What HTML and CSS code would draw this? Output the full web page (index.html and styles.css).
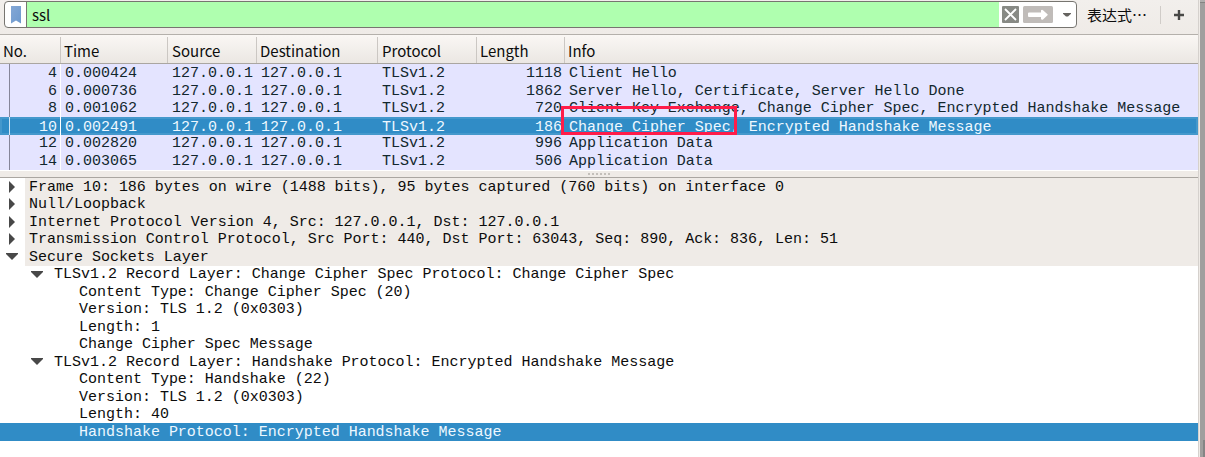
FILE: index.html
```html
<!DOCTYPE html>
<html lang="zh-CN">
<head>
<meta charset="utf-8">
<title>Wireshark</title>
<link rel="stylesheet" href="styles.css">
</head>
<body>
<div class="window">
<main class="app">
  <div class="toolbar">
    <div class="filter">
      <span class="bookmark"><svg width="10" height="18" viewBox="0 0 10 18"><defs><linearGradient id="b" x1="0" y1="0" x2="1" y2="1"><stop offset="0" stop-color="#84a8d6"/><stop offset="1" stop-color="#6d99cd"/></linearGradient></defs><path d="M0 0H10V17.500L5 14.500L0 17.500Z" fill="url(#b)"/></svg></span>
      <span class="query">ssl</span>
      <span class="actions">
        <svg width="17" height="17" viewBox="0 0 17 17"><rect width="17" height="17" rx="1" fill="#888a85"/><path d="M3 3L14 14M14 3L3 14" stroke="#fff" stroke-width="1.800"/></svg>
        <svg class="apply" width="30" height="17" viewBox="0 0 30 17"><rect width="30" height="17" rx="1.500" fill="#c0bcb9"/><path d="M6 6.500H18V4.300Q19 3.300 20 4.200L24.500 8.200Q25 8.700 24.500 9.200L20 13.400Q18.700 14.200 18 13V11H6Q5 11 5 10V7.500Q5 6.500 6 6.500Z" fill="#fff"/></svg>
        <svg class="drop" width="8" height="4" viewBox="0 0 8 4"><path d="M0 0H8V.8L5 3.500H3L0 .8Z" fill="#65635f"/></svg>
      </span>
    </div>
    <span class="expression">表达式…</span>
    <span class="separator"></span>
    <svg class="plus" width="10" height="10" viewBox="0 0 10 10"><path d="M5 0V10M0 5H10" stroke="#484846" stroke-width="2.400"/></svg>
  </div>
  <div class="head cols"><span>No.</span><span>Time</span><span>Source</span><span>Destination</span><span>Protocol</span><span>Length</span><span>Info</span></div>
  <section class="packets">
    <div class="packet cols"><span>4</span><span>0.000424</span><span>127.0.0.1</span><span>127.0.0.1</span><span>TLSv1.2</span><span>1118</span><span>Client Hello</span></div>
    <div class="packet cols"><span>6</span><span>0.000736</span><span>127.0.0.1</span><span>127.0.0.1</span><span>TLSv1.2</span><span>1862</span><span>Server Hello, Certificate, Server Hello Done</span></div>
    <div class="packet cols short"><span>8</span><span>0.001062</span><span>127.0.0.1</span><span>127.0.0.1</span><span>TLSv1.2</span><span>720</span><span>Client Key Exchange, Change Cipher Spec, Encrypted Handshake Message</span></div>
    <div class="packet cols selected"><span>10</span><span>0.002491</span><span>127.0.0.1</span><span>127.0.0.1</span><span>TLSv1.2</span><span>186</span><span>Change Cipher Spec, Encrypted Handshake Message</span></div>
    <div class="packet cols after"><span>12</span><span>0.002820</span><span>127.0.0.1</span><span>127.0.0.1</span><span>TLSv1.2</span><span>996</span><span>Application Data</span></div>
    <div class="packet cols last"><span>14</span><span>0.003065</span><span>127.0.0.1</span><span>127.0.0.1</span><span>TLSv1.2</span><span>506</span><span>Application Data</span></div>
    <div class="highlight"></div>
  </section>
  <div class="splitter"><i></i><i></i><i></i><i></i><i></i><i></i></div>
  <section class="tree">
    <div class="node top"><svg class="closed" width="6" height="12" viewBox="0 0 6 12"><path d="M0 0L6 6L0 12Z"/></svg><span>Frame 10: 186 bytes on wire (1488 bits), 95 bytes captured (760 bits) on interface 0</span></div>
    <div class="node top"><svg class="closed" width="6" height="12" viewBox="0 0 6 12"><path d="M0 0L6 6L0 12Z"/></svg><span>Null/Loopback</span></div>
    <div class="node top"><svg class="closed" width="6" height="12" viewBox="0 0 6 12"><path d="M0 0L6 6L0 12Z"/></svg><span>Internet Protocol Version 4, Src: 127.0.0.1, Dst: 127.0.0.1</span></div>
    <div class="node top"><svg class="closed" width="6" height="12" viewBox="0 0 6 12"><path d="M0 0L6 6L0 12Z"/></svg><span>Transmission Control Protocol, Src Port: 440, Dst Port: 63043, Seq: 890, Ack: 836, Len: 51</span></div>
    <div class="node top"><svg class="open" width="12" height="7" viewBox="0 0 12 7"><path d="M0 0H12V1L6 7L0 1Z"/></svg><span>Secure Sockets Layer</span></div>
    <div class="node record"><svg class="open" width="12" height="7" viewBox="0 0 12 7"><path d="M0 0H12V1L6 7L0 1Z"/></svg><span>TLSv1.2 Record Layer: Change Cipher Spec Protocol: Change Cipher Spec</span></div>
    <div class="node field"><span>Content Type: Change Cipher Spec (20)</span></div>
    <div class="node field"><span>Version: TLS 1.2 (0x0303)</span></div>
    <div class="node field"><span>Length: 1</span></div>
    <div class="node field"><span>Change Cipher Spec Message</span></div>
    <div class="node record"><svg class="open" width="12" height="7" viewBox="0 0 12 7"><path d="M0 0H12V1L6 7L0 1Z"/></svg><span>TLSv1.2 Record Layer: Handshake Protocol: Encrypted Handshake Message</span></div>
    <div class="node field"><span>Content Type: Handshake (22)</span></div>
    <div class="node field"><span>Version: TLS 1.2 (0x0303)</span></div>
    <div class="node field"><span>Length: 40</span></div>
    <div class="node field current"><span>Handshake Protocol: Encrypted Handshake Message</span></div>
  </section>
</main>
<aside class="edge"><div class="edge-top"></div><div class="edge-bottom"></div></aside>
</div>
</body>
</html>
```
FILE: styles.css
```css
* { box-sizing: border-box; }
body { margin: 0; overflow: hidden; background: #fff; }
.window { display: flex; width: 1205px; height: 457px; background: #efebe7; }
.app { width: 1198px; height: 457px; display: flex; flex-direction: column; font: 15px/17.5px "Liberation Mono", monospace; letter-spacing: -0.013px; color: #0c0c0c; }
.toolbar { height: 35px; flex: none; display: flex; align-items: flex-start; border-bottom: 1px solid #b4b0ab; background: linear-gradient(#f2efec, #efebe7); font: 15px/22px "Noto Sans CJK SC", sans-serif; letter-spacing: 0; }
.filter { width: 1073px; height: 27px; margin: 1px 0 0 4px; display: flex; border: 1px solid #777570; border-radius: 4px; background: #fff; overflow: hidden; flex: none; }
.bookmark { width: 22px; padding: 4px 0 0 6px; border-right: 1px solid #777570; line-height: 0; }
.query { flex: 1; padding: 2px 0 0 5px; background: #afffaf; }
.actions { width: 77px; display: flex; padding: 4px 0 0 3px; }
.apply { margin-left: 4px; }
.drop { margin: 7px 0 0 10px; }
.expression { width: 70px; margin: 4px 0 0 10px; white-space: nowrap; }
.separator { width: 1px; height: 18px; margin: 6px 0 0 3px; background: #d0ccc8; }
.plus { margin: 10px 0 0 13px; }
.cols { display: grid; grid-template-columns: 61px 107px 89px 121px 99px 88px 1fr; }
.head { height: 29px; flex: none; padding-top: 2px; border-bottom: 1px solid #aaa6a1; background: linear-gradient(#faf7f4, #ebe7e3); font: 15px/28px "Noto Sans CJK SC", sans-serif; letter-spacing: 0; }
.head span { height: 26px; padding-left: 3px; border-right: 1px solid #cbc7c3; white-space: nowrap; overflow: hidden; }
.head span:nth-child(3), .head span:nth-child(5) { padding-left: 4px; }
.head span:last-child { border: 0; }
.packets { position: relative; height: 107px; flex: none; border-bottom: 1px solid #fff; background: #e4e4ff; color: #12272e; }
.packet { height: 17.7px; line-height: 19px; white-space: pre; }
.short { height: 17.6px; }
.packet span { height: 100%; padding-left: 4px; }
.packet span:first-child { padding: 0 3px 0 0; text-align: right; border-right: 1px solid #fff; background: linear-gradient(#85859a, #85859a) 9px 0 / 1px 100% no-repeat; }
.packet span:nth-child(6) { padding: 0 3px 0 0; text-align: right; }
.packet.selected { height: 18px; line-height: 21px; background: #308cc6; box-shadow: inset 0 0 0 2px #4498cc; color: #eef8ff; }
.packet.selected span:first-child { background-image: linear-gradient(#cde5f5, #cde5f5); }
.after { line-height: 18px; }
.last { line-height: 17px; }
.highlight { position: absolute; left: 561px; top: 42px; width: 176px; height: 29px; border: 3px solid #ff1c49; }
.splitter { height: 7px; flex: none; display: flex; justify-content: center; gap: 2px; padding-top: 2px; border-bottom: 1px solid #aaa6a1; }
.splitter i { width: 2px; height: 2px; background: #c3bfba; }
.tree { flex: 1; background: #fff; }
.node { height: 17.53px; display: flex; align-items: center; white-space: pre; }
.node span { padding-top: 1px; }
.node svg { flex: none; fill: #484848; }
.top { background: linear-gradient(#efebe7, #efebe7) 25px 0 no-repeat; }
.closed { margin: 0 14px 0 9px; }
.open { margin: 0 11px 0 6px; }
.record { padding-left: 25px; }
.field { padding-left: 79px; }
.current { background: #308cc6; color: #eef8ff; }
.edge { width: 7px; border-left: 1px solid #d5d1cd; display: flex; flex-direction: column; padding-left: 1px; }
.edge-top { height: 440px; background: linear-gradient(#b0afae 2px, #858482 2px, #858482 3px, #a09f9e 3px); }
.edge-bottom { flex: 1; background: linear-gradient(90deg, #a09f9e 3px, #858585 3px); }
```
